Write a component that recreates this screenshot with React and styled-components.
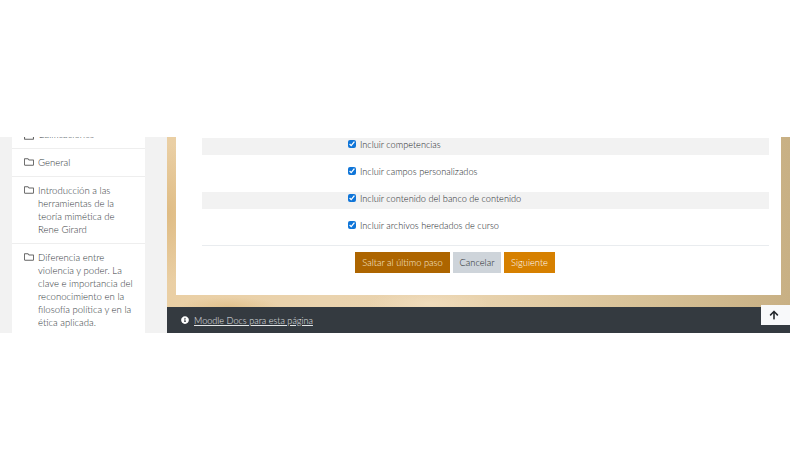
import styled, { createGlobalStyle } from "styled-components"
import { FaRegFolder, FaInfoCircle, FaArrowUp, FaRegCalendarAlt } from "react-icons/fa"

const GlobalStyle = createGlobalStyle`
  html, body {
    margin: 0;
    padding: 0;
    background: #fff;
  }
`

const Frame = styled.div`
  display: flex;
  gap: 22px;
  width: 778px;
  height: 196px;
  margin-top: 137px;
  padding-left: 12px;
  overflow: hidden;
  background: #f2f2f2;
  font-family: "Lato", sans-serif;
  font-weight: 300;
  font-size: 9.6px;
  color: #343a40;
`

const Sidebar = styled.nav`
  flex: 0 0 133px;
  margin-top: -16px;
  background: #fff;
`

const SideItem = styled.div`
  display: flex;
  gap: 4px;
  padding: 7px 8px 7px 12px;
  border-bottom: 1px solid #eee;
  line-height: 13px;
  color: #343a40;

  svg {
    flex: 0 0 10px;
    width: 10px;
    height: 12px;
    color: #666;
  }
`

const Main = styled.main`
  position: relative;
  flex: 1;
  display: flex;
  flex-direction: column;
  min-width: 0;
`

const Textured = styled.div`
  padding: 0 9px 12px;
  background:
    radial-gradient(60px 14px at 42% 98%, #f0dcbc 0%, rgba(240, 220, 188, 0) 100%),
    radial-gradient(40px 70px at 0% 45%, #dfbc84 0%, rgba(223, 188, 132, 0) 100%),
    radial-gradient(50px 10px at 10% 100%, #e2c28e 0%, rgba(226, 194, 142, 0) 100%),
    linear-gradient(90deg, #eacfa4 0%, #ead3ae 25%, #e8d2ad 50%, #d6c096 78%, #c8b084 100%);
`

const Card = styled.div`
  background: #fff;
  padding: 1px 12px 22px 26px;
`

const OptionRow = styled.div`
  height: 17px;
  margin-bottom: 10px;
  padding-left: 146px;
  background: ${props => props.$shaded ? "#f2f2f2" : "transparent"};
`

const OptionLabel = styled.label`
  display: flex;
  align-items: center;
  gap: 4px;
  height: 13px;
  font-size: 9.2px;
  color: #212529;
`

const Check = styled.input`
  width: 8px;
  height: 8px;
  margin: -1px 0 0;
  accent-color: #0f75d8;
`

const Actions = styled.div`
  display: flex;
  gap: 3px;
  margin-top: -1px;
  padding: 6px 0 0 153px;
  border-top: 1px solid #e9ecef;
`

const Button = styled.button`
  height: 21px;
  width: ${props => props.$width}px;
  padding: 0;
  border: 0;
  border-radius: 0;
  background: ${props => props.$bg};
  color: ${props => props.$fg};
  font-family: inherit;
  font-weight: 300;
  font-size: 9.3px;
`

const Footer = styled.footer`
  display: flex;
  align-items: center;
  gap: 5px;
  height: 26px;
  padding-left: 14px;
  background: #343a40;
  color: #e3e6e8;

  svg {
    width: 8px;
    height: 8px;
    color: #fff;
  }
`

const DocsLink = styled.a`
  color: inherit;
  font-size: 9.15px;
  text-decoration: underline;
`

const TopButton = styled.a`
  position: absolute;
  right: 0;
  top: 168px;
  display: flex;
  align-items: center;
  justify-content: center;
  width: 25px;
  height: 20px;
  padding-right: 4px;
  background: #f8f9fa;
  color: #212529;

  svg {
    width: 10px;
    height: 10px;
  }
`

const sideItems = [
  { icon: <FaRegCalendarAlt />, text: "Calificaciones" },
  { icon: <FaRegFolder />, text: "General" },
  { icon: <FaRegFolder />, text: "Introducción a las herramientas de la teoría mimética de Rene Girard" },
  { icon: <FaRegFolder />, text: "Diferencia entre violencia y poder. La clave e importancia del reconocimiento en la filosofía política y en la ética aplicada." },
]

const options = [
  "Incluir competencias",
  "Incluir campos personalizados",
  "Incluir contenido del banco de contenido",
  "Incluir archivos heredados de curso",
]

export default function App() {
  return (
    <>
      <GlobalStyle />
      <Frame>
        <Sidebar>
          {sideItems.map(item => (
            <SideItem key={item.text}>
              {item.icon}
              <span>{item.text}</span>
            </SideItem>
          ))}
        </Sidebar>
        <Main>
          <Textured>
            <Card>
              {options.map((option, i) => (
                <OptionRow key={option} $shaded={i % 2 === 0}>
                  <OptionLabel>
                    <Check type="checkbox" defaultChecked />
                    {option}
                  </OptionLabel>
                </OptionRow>
              ))}
              <Actions>
                <Button $width={95} $bg="#ad6500" $fg="#fbeeda">Saltar al último paso</Button>
                <Button $width={48} $bg="#ced4da" $fg="#212529">Cancelar</Button>
                <Button $width={51} $bg="#d68000" $fg="#fff">Siguiente</Button>
              </Actions>
            </Card>
          </Textured>
          <Footer>
            <FaInfoCircle />
            <DocsLink href="#">Moodle Docs para esta página</DocsLink>
          </Footer>
          <TopButton href="#"><FaArrowUp /></TopButton>
        </Main>
      </Frame>
    </>
  )
}
